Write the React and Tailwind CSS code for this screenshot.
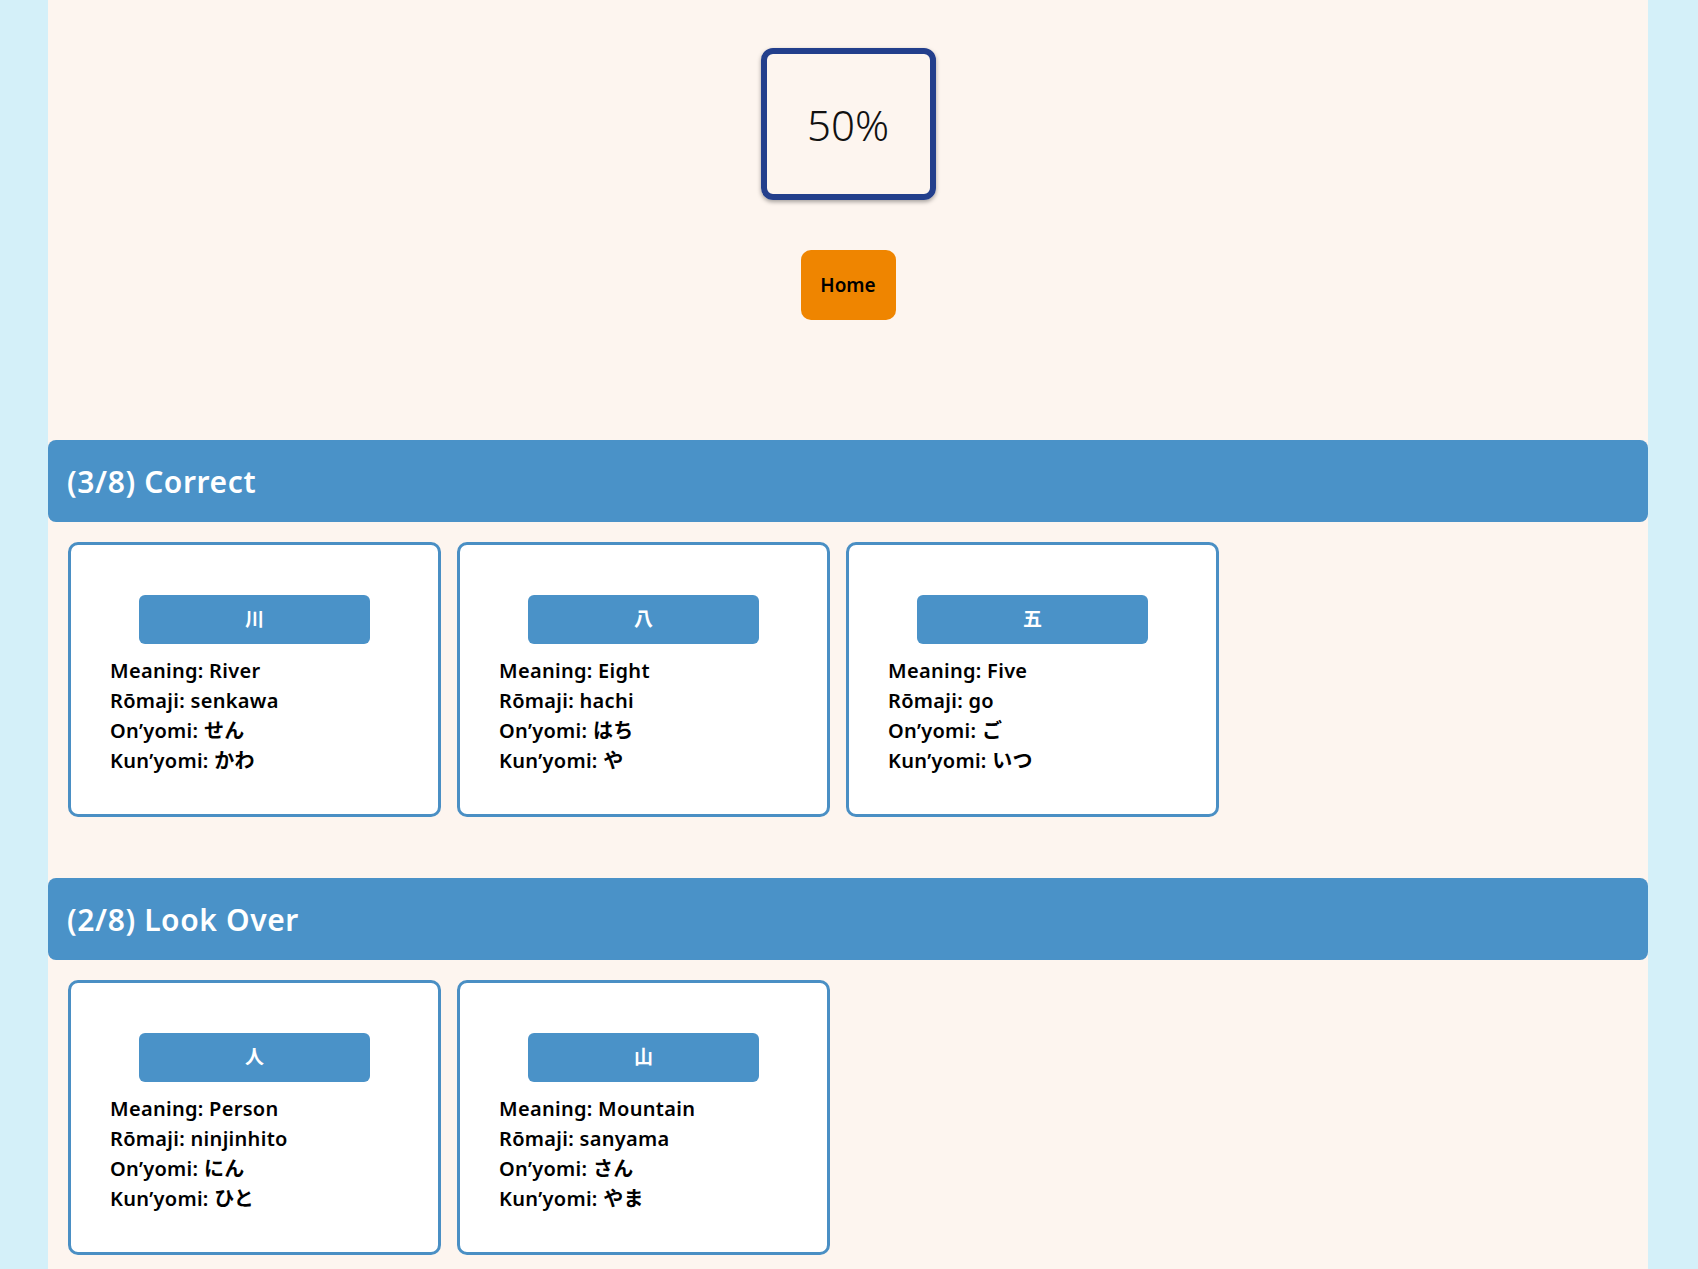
import React from 'react';

const correct = [
  { kanji: '川', meaning: 'River', romaji: 'senkawa', on: 'せん', kun: 'かわ' },
  { kanji: '八', meaning: 'Eight', romaji: 'hachi', on: 'はち', kun: 'や' },
  { kanji: '五', meaning: 'Five', romaji: 'go', on: 'ご', kun: 'いつ' },
];

const lookOver = [
  { kanji: '人', meaning: 'Person', romaji: 'ninjinhito', on: 'にん', kun: 'ひと' },
  { kanji: '山', meaning: 'Mountain', romaji: 'sanyama', on: 'さん', kun: 'やま' },
];

const font = { fontFamily: '"Noto Sans", "Noto Sans CJK JP", sans-serif' };

const KanjiCard = ({ item }) => (
  <div className="w-[373px] h-[275px] bg-white border-[3px] border-[#4a8fc4] rounded-[10px] pt-[50px] px-[39px]">
    <div className="mx-auto w-[231px] h-[49px] bg-[#4a92c8] rounded-[6px] flex items-center justify-center text-white text-[19px] font-bold">
      {item.kanji}
    </div>
    <div className="mt-[12px] text-[20px] font-semibold tracking-[0.3px] text-black leading-[30px]">
      <div>Meaning: {item.meaning}</div>
      <div>Rōmaji: {item.romaji}</div>
      <div>On’yomi: {item.on}</div>
      <div>Kun’yomi: {item.kun}</div>
    </div>
  </div>
);

const Section = ({ title, items }) => (
  <div>
    <div className="h-[82px] bg-[#4a92c8] rounded-[8px] flex items-center px-[19px] text-white text-[30px] font-semibold tracking-[0.6px]">
      {title}
    </div>
    <div className="flex gap-[16px] px-[20px] pt-[20px]">
      {items.map((it) => (
        <KanjiCard key={it.kanji} item={it} />
      ))}
    </div>
  </div>
);

export default function App() {
  return (
    <div className="min-h-screen bg-[#d4f0f9]" style={font}>
      <div className="ml-[48px] w-[1600px] min-h-screen bg-[#fdf5ef] pb-[40px]">
        <div className="flex flex-col items-center pt-[48px]">
          <div className="w-[175px] h-[152px] border-[6px] border-[#233f8c] rounded-[12px] shadow-[0_2px_4px_rgba(0,0,0,0.35)] flex items-center justify-center text-[42px] font-light text-[#111]">
            50%
          </div>
          <button className="mt-[50px] w-[95px] h-[70px] bg-[#ef8500] rounded-[10px] text-[19px] font-semibold text-black">
            Home
          </button>
        </div>
        <div className="mt-[120px]">
          <Section title="(3/8) Correct" items={correct} />
        </div>
        <div className="mt-[61px]">
          <Section title="(2/8) Look Over" items={lookOver} />
        </div>
      </div>
    </div>
  );
}
